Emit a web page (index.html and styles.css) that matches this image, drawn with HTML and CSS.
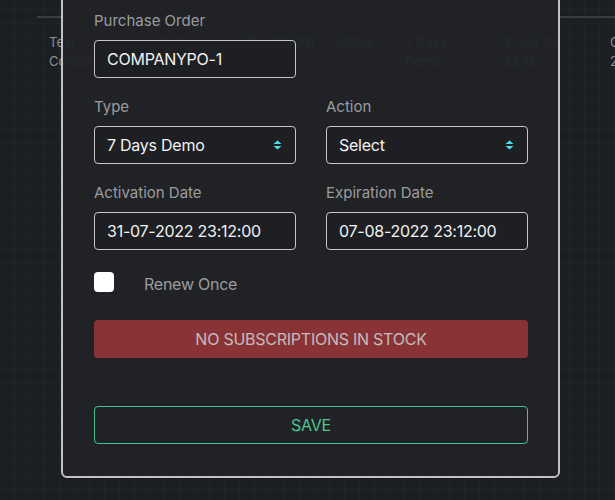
FILE: index.html
```html
<!DOCTYPE html>
<html lang="en">
<head>
<meta charset="utf-8">
<title>Subscription</title>
<link rel="stylesheet" href="styles.css">
</head>
<body>
<div class="page">
  <div class="table">
    <div class="row">
      <div class="cell c1">Test<br>Compa</div>
      <div class="cell c2">Test</div>
      <div class="cell c3">TESTC-001</div>
      <div class="cell c4">Active</div>
      <div class="cell c5">7 Days<br>Demo</div>
      <div class="cell c6">31 Jul 22<br>23:12</div>
      <div class="cell c7">C<br>2</div>
    </div>
  </div>

  <div class="modal">
    <div class="grid">
      <div class="field">
        <label class="label">Purchase Order</label>
        <div class="input">COMPANYPO-1</div>
      </div>
      <div></div>
      <div class="field">
        <label class="label">Type</label>
        <div class="input select"><span>7 Days Demo</span>
          <svg class="arrows" width="9" height="10" viewBox="0 0 9 10"><path d="M4.5 0.5 L8.5 4 L0.5 4 Z M0.5 6 L8.5 6 L4.5 9.5 Z" fill="#4fdcea"/></svg>
        </div>
      </div>
      <div class="field">
        <label class="label">Action</label>
        <div class="input select"><span>Select</span>
          <svg class="arrows" width="9" height="10" viewBox="0 0 9 10"><path d="M4.5 0.5 L8.5 4 L0.5 4 Z M0.5 6 L8.5 6 L4.5 9.5 Z" fill="#4fdcea"/></svg>
        </div>
      </div>
      <div class="field">
        <label class="label">Activation Date</label>
        <div class="input">31-07-2022 23:12:00</div>
      </div>
      <div class="field">
        <label class="label">Expiration Date</label>
        <div class="input">07-08-2022 23:12:00</div>
      </div>
    </div>
    <div class="check-row">
      <span class="checkbox"></span>
      <span class="check-label">Renew Once</span>
    </div>
    <div class="btn btn-danger">NO SUBSCRIPTIONS IN STOCK</div>
    <div class="btn btn-save">SAVE</div>
  </div>
</div>
</body>
</html>
```

FILE: styles.css
```css
* { box-sizing: border-box; }
html, body {
  margin: 0;
  height: 100%;
}
body {
  background-color: #1b1e22;
  background-image:
    linear-gradient(rgba(255,255,255,0.025) 1px, transparent 1px),
    linear-gradient(90deg, rgba(255,255,255,0.025) 1px, transparent 1px);
  background-size: 15px 15px;
  background-position: 14px 8px;
  font-family: Inter, "Noto Sans", sans-serif;
  overflow: hidden;
}
.page {
  position: relative;
  width: 615px;
  height: 500px;
  overflow: hidden;
}
.table {
  margin-left: 37px;
  padding-top: 16px;
}
.row {
  display: flex;
  border-top: 2px solid #3a3c40;
  padding-top: 15px;
  font-size: 13px;
  line-height: 19px;
  color: #8e9094;
}
.cell { white-space: nowrap; flex: none; }
.c1 { width: 121px; padding-left: 12px; }
.c2 { width: 87px; }
.c3 { width: 89px; }
.c4 { width: 71px; }
.c5 { width: 98px; }
.c6 { width: 107px; }
.c7 { width: 40px; }

.modal {
  position: absolute;
  left: 61px;
  top: -20px;
  width: 499px;
  background: rgba(33, 35, 39, 0.95);
  border: 2px solid #c2c2c2;
  border-radius: 6px;
  padding: 26px 30px 32px 31px;
}
.field {
  display: flex;
  flex-direction: column;
}
.label {
  font-size: 15px;
  line-height: 24px;
  padding-top: 1px;
  color: #9b9c9e;
  margin-bottom: 7px;
}
.input {
  height: 38px;
  border: 1px solid #c6c6c6;
  border-radius: 4px;
  padding: 0 12px;
  display: flex;
  align-items: center;
  font-size: 16px;
  letter-spacing: -0.25px;
  color: #f2f2f2;
  background: #1d1f23;
}
.select {
  justify-content: space-between;
  padding-right: 13px;
}
.arrows { display: block; }
.grid {
  display: grid;
  grid-template-columns: 202px 202px;
  column-gap: 30px;
  row-gap: 16px;
}
.check-row {
  display: flex;
  align-items: center;
  margin-top: 22px;
  height: 20px;
}
.checkbox {
  width: 20px;
  height: 20px;
  background: #fff;
  border-radius: 4px;
}
.check-label {
  margin-left: 30px;
  padding-top: 3px;
  font-size: 16px;
  letter-spacing: -0.25px;
  color: #9b9c9e;
}
.btn {
  height: 38px;
  border-radius: 4px;
  display: flex;
  align-items: center;
  justify-content: center;
  font-size: 16px;
  letter-spacing: -0.25px;
}
.btn-danger {
  margin-top: 28px;
  background: #8a3337;
  color: #c2bcbc;
}
.btn-save {
  margin-top: 48px;
  border: 1px solid #46c28e;
  color: #4cc792;
  background: transparent;
}
```
